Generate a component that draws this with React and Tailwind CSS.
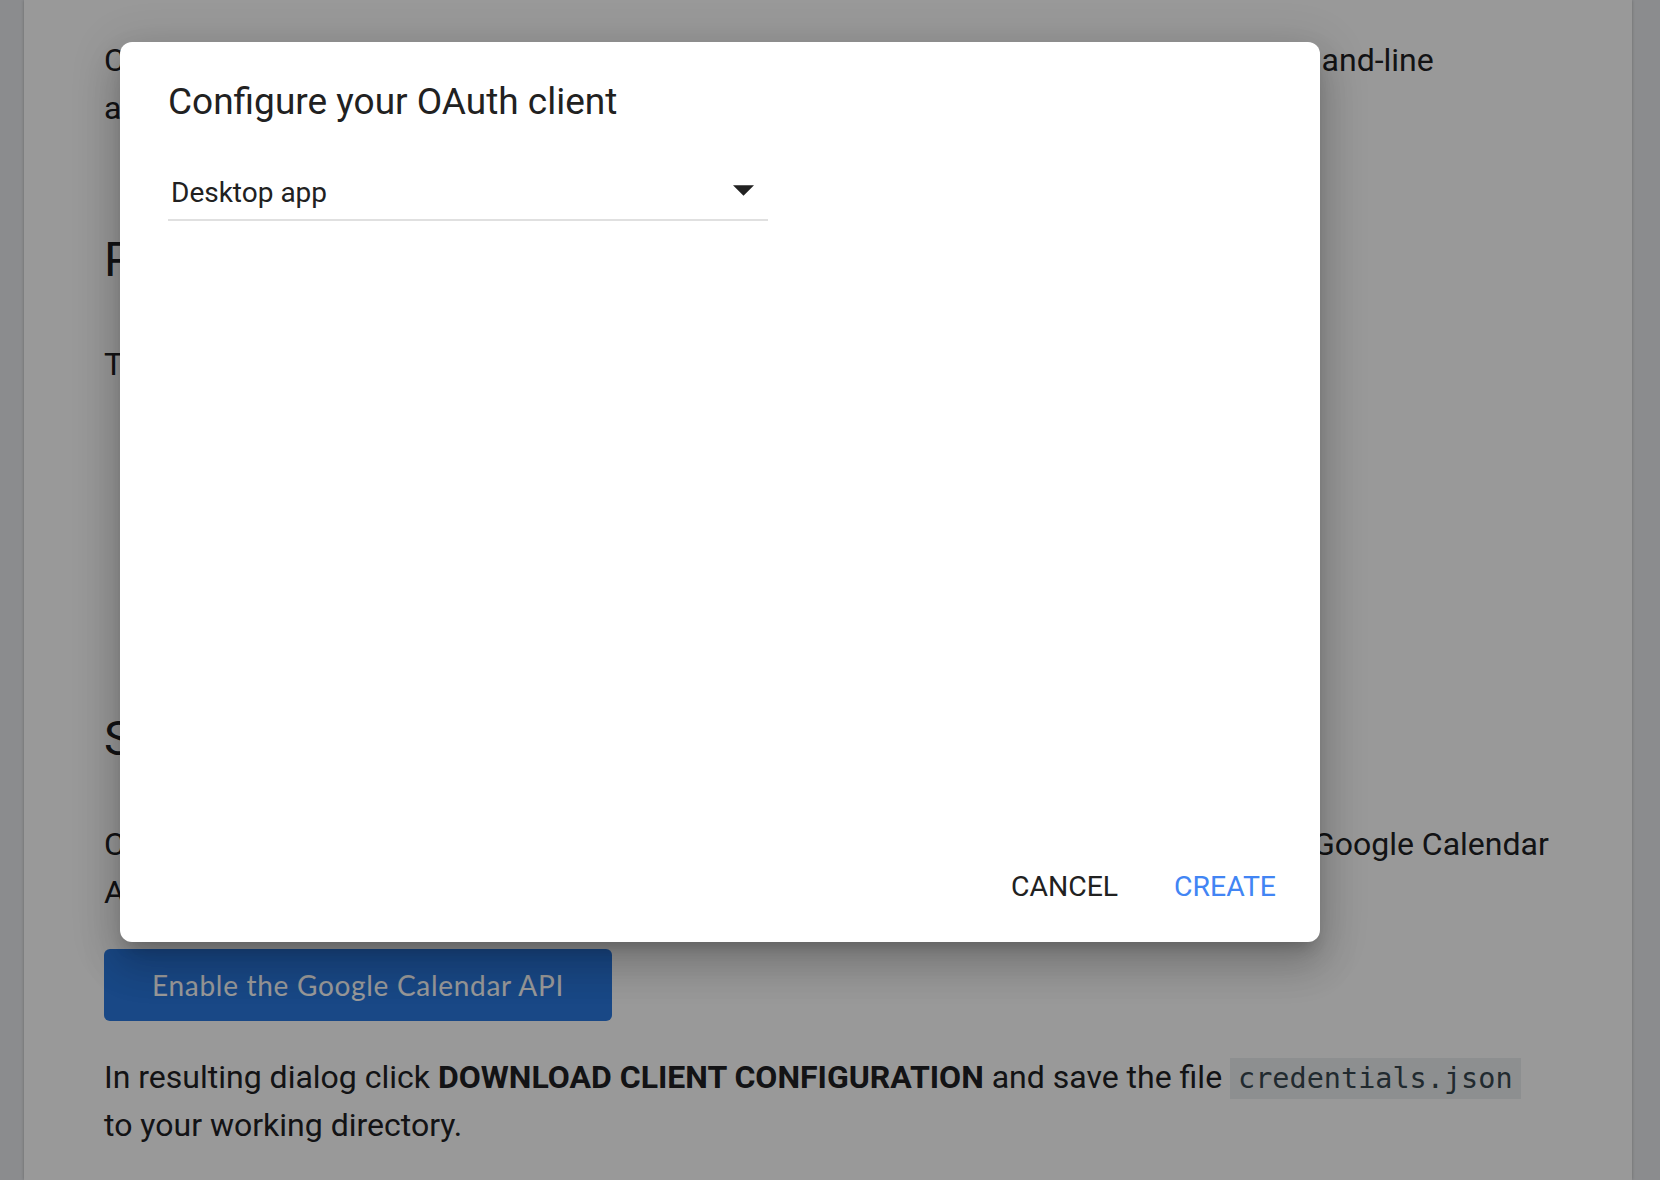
import React from "react";

const PREREQS = [
  "Python 2.6 or greater",
  "The pip package management tool",
  "A Google account with Google Calendar enabled",
];

function ArrowDrop() {
  return (
    <svg width="21" height="11" viewBox="0 0 10 5" className="mt-[10px] mr-[14px] shrink-0">
      <path d="M0 0l5 5 5-5z" fill="#212121" />
    </svg>
  );
}

function OAuthDialog() {
  return (
    <div className="absolute left-[120px] top-[42px] flex h-[900px] w-[1200px] flex-col rounded-[12px] bg-white px-[48px] pt-[36px] pb-[37px] shadow-[0_11px_15px_-7px_rgba(0,0,0,0.2),0_24px_38px_3px_rgba(0,0,0,0.14),0_9px_46px_8px_rgba(0,0,0,0.12)]">
      {/* Title */}
      <h1 className="text-[37px] leading-[48px] font-normal text-[#212121]">Configure your OAuth client</h1>

      {/* Application type select */}
      <div className="mt-[49px] flex w-[600px] items-start justify-between border-b-2 border-[#e0e0e0] pb-[8px]">
        <span className="pl-[3px] text-[28px] leading-[36px] text-[#212121]">Desktop app</span>
        <ArrowDrop />
      </div>

      {/* Actions */}
      <div className="mt-auto -mr-[20px] flex justify-end gap-[24px]">
        <button className="px-[16px] text-[28.4px] leading-[36px] text-[#212121]">CANCEL</button>
        <button className="px-[16px] text-[28.4px] leading-[36px] text-[#4285f4]">CREATE</button>
      </div>
    </div>
  );
}

export default function App() {
  return (
    <div className="relative h-[1180px] w-full overflow-hidden bg-[#e8eaed] font-['Roboto','Liberation_Sans',sans-serif]">
      {/* Page behind the dialog */}
      <div className="ml-[24px] h-full w-[1608px] bg-white px-[80px] pt-[36px] text-[32px] leading-[48px] text-[#202124] shadow-[0_0_3px_rgba(0,0,0,0.25)]">
        <p className="whitespace-nowrap">
          Complete the steps described in the rest of this page to create a simple Python command-line
          <br />
          application that makes requests to the Google Calendar API.
        </p>

        <h2 className="mt-[96px] text-[48px] leading-[64px] font-normal">Prerequisites</h2>
        <p className="mt-[48px]">To run this quickstart, you need the following prerequisites:</p>
        <ul className="mt-[32px] list-disc pl-[80px]">
          {PREREQS.map((item) => (
            <li key={item}>{item}</li>
          ))}
        </ul>

        <h2 className="mt-[143px] text-[48px] leading-[64px] font-normal">Step 1: Turn on the Google Calendar API</h2>
        <p className="mt-[49px] whitespace-nowrap">
          Click this button to create a new Cloud Platform project and automatically enable the Google Calendar
          <br />
          API:
        </p>

        <button className="mt-[33px] flex h-[72px] w-[508px] items-center justify-center rounded-[6px] bg-[#2a78df] font-['Lato','Open_Sans',sans-serif] text-[28px] tracking-[0.7px] text-white">
          Enable the Google Calendar API
        </button>

        <p className="mt-[32px] whitespace-nowrap">
          In resulting dialog click <b className="font-bold">DOWNLOAD CLIENT CONFIGURATION</b> and save the file{" "}
          <code className="bg-[#eceff1] px-[8px] py-[4px] font-['DejaVu_Sans_Mono','Liberation_Mono',monospace] text-[28.5px] leading-none text-[#37474f]">
            credentials.json
          </code>
          <br />
          to your working directory.
        </p>
      </div>

      {/* Scrim */}
      <div className="absolute inset-0 bg-black/40" />

      <OAuthDialog />
    </div>
  );
}
